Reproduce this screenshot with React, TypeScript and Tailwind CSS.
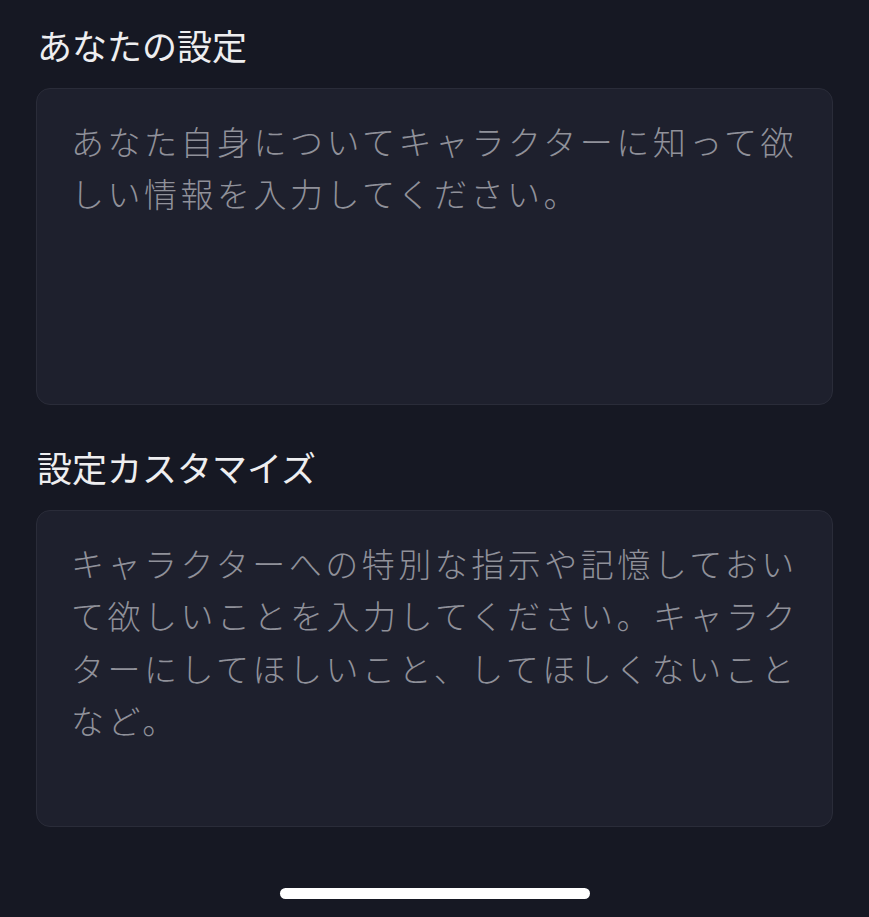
import React from "react";

const font = { fontFamily: '"Noto Sans CJK JP", "Noto Sans", sans-serif' };

function Field({ title, lines }: { title: string; lines: string[] }) {
  return (
    <div className="flex flex-col">
      <div className="h-[50px] text-[35px] leading-[50px] text-[#eeeef0] pl-[1px]">{title}</div>
      <div className="mt-[18px] h-[317px] rounded-[14px] border border-[#2a2c39] bg-[#1e202d] pl-[34px] pr-[20px] pt-[26px]">
        {lines.map((l, i) => (
          <div
            key={i}
            className="whitespace-nowrap text-[33px] leading-[52.4px] tracking-[3.5px] font-light text-[#90919a]"
          >
            {l}
          </div>
        ))}
      </div>
    </div>
  );
}

export default function App() {
  return (
    <div className="w-[869px] h-[917px] bg-[#161823] flex flex-col px-[36px] pt-[20px]" style={font}>
      <Field
        title="あなたの設定"
        lines={["あなた自身についてキャラクターに知って欲", "しい情報を入力してください。"]}
      />
      <div className="h-[37px]" />
      <Field
        title="設定カスタマイズ"
        lines={[
          "キャラクターへの特別な指示や記憶しておい",
          "て欲しいことを入力してください。キャラク",
          "ターにしてほしいこと、してほしくないこと",
          "など。",
        ]}
      />
      <div className="flex justify-center mt-[61px]">
        <div className="w-[310px] h-[11px] rounded-full bg-white" />
      </div>
    </div>
  );
}
